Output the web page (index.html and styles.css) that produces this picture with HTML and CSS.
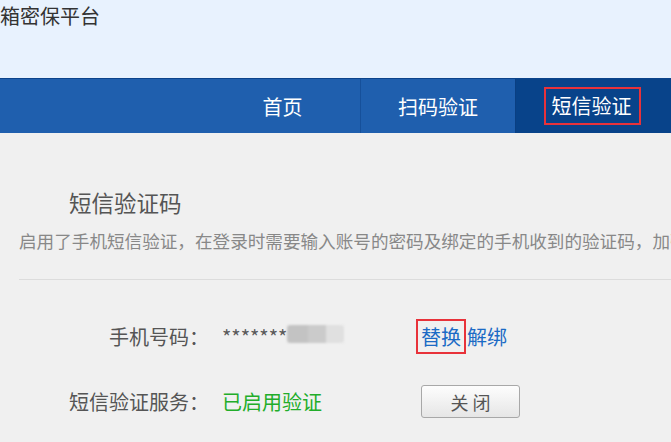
FILE: index.html
```html
<!DOCTYPE html>
<html lang="zh-CN">
<head>
<meta charset="utf-8">
<title>短信验证</title>
<link rel="stylesheet" href="styles.css">
</head>
<body>
<header class="top">
  <div class="brand">箱密保平台</div>
</header>
<nav class="nav">
  <a class="nav-item" href="#">首页</a>
  <a class="nav-item" href="#">扫码验证</a>
  <a class="nav-item active" href="#"><span class="nav-mark">短信验证</span></a>
</nav>
<main class="content">
  <h2 class="title">短信验证码</h2>
  <p class="desc">启用了手机短信验证，在登录时需要输入账号的密码及绑定的手机收到的验证码，加强账号的安全性。</p>
  <div class="divider"></div>
  <div class="form">
    <div class="label">手机号码：</div>
    <div class="value"><span class="stars">*******</span><span class="masked"></span></div>
    <div class="action"><a class="link link-mark" href="#">替换</a><a class="link" href="#">解绑</a></div>

    <div class="label">短信验证服务：</div>
    <div class="value status">已启用验证</div>
    <div class="action"><button class="btn" type="button">关 闭</button></div>
  </div>
</main>
</body>
</html>
```
FILE: styles.css
```css
html, body {
  margin: 0;
  padding: 0;
}
body {
  width: 671px;
  overflow: hidden;
  background: #f0f0f0;
  font-family: "Noto Sans CJK SC", "Noto Sans", sans-serif;
}
.top {
  height: 78px;
  box-sizing: border-box;
  padding-top: 5px;
  background: #e8f2fe;
}
.brand {
  font-size: 20px;
  line-height: 22px;
  color: #333;
}
.nav {
  display: flex;
  justify-content: flex-end;
  height: 55px;
  box-sizing: border-box;
  border-top: 1px solid #0c448b;
  background: #1f5fae;
}
.nav-item {
  width: 155px;
  box-sizing: border-box;
  display: flex;
  align-items: center;
  justify-content: center;
  color: #fff;
  font-size: 20px;
  text-decoration: none;
}
.nav-item + .nav-item {
  border-left: 1px solid #16509a;
}
.nav-item.active {
  width: 156px;
  padding-right: 3px;
  background: #08438a;
  border-left-color: #0a3f82;
}
.nav-mark {
  display: inline-block;
  border: 2px solid #e8323a;
  padding: 0 7px 0 6px;
  line-height: 34px;
}
.content {
  padding-left: 19px;
  overflow: hidden;
}
.title {
  margin: 54px 0 0 50px;
  font-size: 22.5px;
  line-height: 30px;
  font-weight: normal;
  color: #555;
}
.desc {
  margin: 12px 0 0;
  font-size: 17.6px;
  line-height: 24px;
  color: #888;
  white-space: nowrap;
}
.divider {
  margin-top: 26px;
  height: 1px;
  background: #dcdcdc;
}
.form {
  margin-top: 24px;
  display: grid;
  grid-template-columns: 190px 207px auto;
  grid-auto-rows: 65px;
  align-items: center;
}
.label {
  text-align: right;
  font-size: 20px;
  line-height: 28px;
  color: #555;
}
.value {
  padding-left: 13px;
  font-size: 20px;
  line-height: 28px;
  color: #555;
  white-space: nowrap;
}
.stars {
  color: #5a5a5a;
}
.masked {
  display: inline-block;
  vertical-align: top;
  margin-top: 2px;
  width: 57px;
  height: 18px;
  border-radius: 3px;
  background: linear-gradient(to right, #c3c3c3 0 36%, #cbcbcb 36% 68%, #e0e0e0 68%);
  filter: blur(0.8px);
}
.status {
  color: #22ad2a;
}
.action {
  font-size: 20px;
  line-height: 28px;
  white-space: nowrap;
}
.link {
  color: #1b6ac5;
  text-decoration: none;
}
.link-mark {
  display: inline-block;
  line-height: 25px;
  margin: 0 6px 0 5px;
  outline: 2px solid #e8323a;
  outline-offset: 3px;
}
.btn {
  margin-left: 5px;
  width: 99px;
  height: 33px;
  border: 1px solid #a8a8a8;
  border-radius: 3px;
  background: linear-gradient(#fdfdfd, #e6e6e6);
  font-family: "Noto Sans CJK SC", sans-serif;
  font-size: 18px;
  color: #555;
  padding: 0;
  display: block;
}
```
